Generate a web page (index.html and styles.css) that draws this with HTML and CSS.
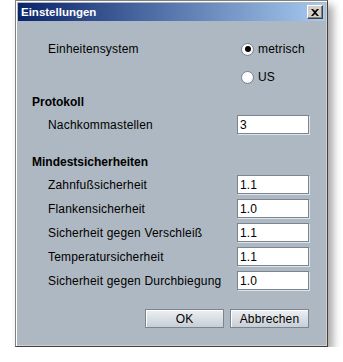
FILE: index.html
```html
<!DOCTYPE html>
<html lang="de">
<head>
    <meta charset="UTF-8">
    <title>Einstellungen</title>
    <link rel="stylesheet" href="styles.css">
</head>
<body>
    <div class="window">
        <div class="titlebar">
            <span class="title">Einstellungen</span>
            <span class="close">
                <svg width="8" height="7" viewBox="0 0 8 7"><path d="M0 0h2l2 2 2-2h2L5 3.5 8 7H6L4 5 2 7H0l3-3.5z" fill="#000"/></svg>
            </span>
        </div>
        <div class="content">
            <div class="row unit-row">
                <span class="label">Einheitensystem</span>
                <label class="radio"><span class="dot checked"></span>metrisch</label>
            </div>
            <div class="row us-row">
                <span class="label"></span>
                <label class="radio radio-us"><span class="dot"></span>US</label>
            </div>

            <div class="heading">Protokoll</div>
            <div class="row">
                <span class="label">Nachkommastellen</span>
                <input class="field" type="text" value="3">
            </div>

            <div class="heading heading-gap">Mindestsicherheiten</div>
            <div class="rows">
                <div class="row">
                    <span class="label">Zahnfußsicherheit</span>
                    <input class="field" type="text" value="1.1">
                </div>
                <div class="row">
                    <span class="label">Flankensicherheit</span>
                    <input class="field" type="text" value="1.0">
                </div>
                <div class="row">
                    <span class="label">Sicherheit gegen Verschleiß</span>
                    <input class="field" type="text" value="1.1">
                </div>
                <div class="row">
                    <span class="label">Temperatursicherheit</span>
                    <input class="field" type="text" value="1.1">
                </div>
                <div class="row">
                    <span class="label">Sicherheit gegen Durchbiegung</span>
                    <input class="field" type="text" value="1.0">
                </div>
            </div>

            <div class="buttons">
                <button>OK</button>
                <button>Abbrechen</button>
            </div>
        </div>
    </div>
</body>
</html>
```
FILE: styles.css
```css
* {
    box-sizing: border-box;
}
body {
    margin: 0;
    background: #fff;
    font-family: "Liberation Sans", Arial, sans-serif;
    font-size: 12px;
    color: #000;
}
.window {
    margin-left: 15px;
    width: 313px;
    height: 347px;
    padding: 2px;
    background: #aeb8c2;
    border: 1px solid;
    border-color: #808080 #404040 #404040 #808080;
    box-shadow: inset 1px 1px #fff, inset -1px -1px #d4d0c8, 5px 5px 8px rgba(0, 0, 0, 0.35);
}
.titlebar {
    height: 18px;
    display: flex;
    align-items: center;
    justify-content: space-between;
    padding: 0 2px 0 3px;
    background: linear-gradient(to right, #0a246a, #a6caf0);
}
.title {
    color: #fff;
    font-weight: bold;
    font-size: 11.5px;
}
.close {
    width: 16px;
    height: 14px;
    display: flex;
    align-items: center;
    justify-content: center;
    background: #d4d0c8;
    border: 1px solid;
    border-color: #fff #404040 #404040 #fff;
    box-shadow: inset -1px -1px #808080;
}
.content {
    padding: 18px 16px 0 14px;
}
.row {
    display: flex;
    align-items: center;
    justify-content: space-between;
    height: 19px;
    padding-left: 16px;
}
.label,
.radio,
.field,
button {
    letter-spacing: 0.18px;
}
.unit-row {
    height: 20px;
}
.us-row {
    height: 20px;
    margin-top: 8px;
}
.radio {
    display: flex;
    align-items: center;
    gap: 4px;
    width: 68px;
}
.dot {
    width: 13px;
    height: 13px;
    border-radius: 50%;
    border: 1px solid #7a8592;
    background: radial-gradient(circle at 40% 35%, #fff 45%, #dfe4ea);
    display: flex;
    align-items: center;
    justify-content: center;
}
.dot.checked::after {
    content: "";
    width: 6px;
    height: 6px;
    border-radius: 50%;
    background: #000;
}
.heading {
    font-weight: bold;
    height: 16px;
    line-height: 16px;
    margin: 7px 0 5px;
}
.heading-gap {
    margin-top: 20px;
}
.rows {
    display: flex;
    flex-direction: column;
    gap: 5px;
}
.field {
    width: 72px;
    height: 19px;
    padding: 0 2px;
    font: inherit;
    color: #000;
    background: #fff;
    border: 1px solid #7a8592;
    box-shadow: 1px 1px 0 #dfe4ea;
    outline: none;
}
.buttons {
    display: flex;
    justify-content: flex-end;
    gap: 6px;
    margin-top: 19px;
}
button {
    width: 79px;
    height: 19px;
    font: inherit;
    color: #000;
    border: 1px solid #7a8592;
    background: linear-gradient(#edf0f3, #c7ced6);
    box-shadow: inset 1px 1px #fff;
    padding: 0;
}
```
